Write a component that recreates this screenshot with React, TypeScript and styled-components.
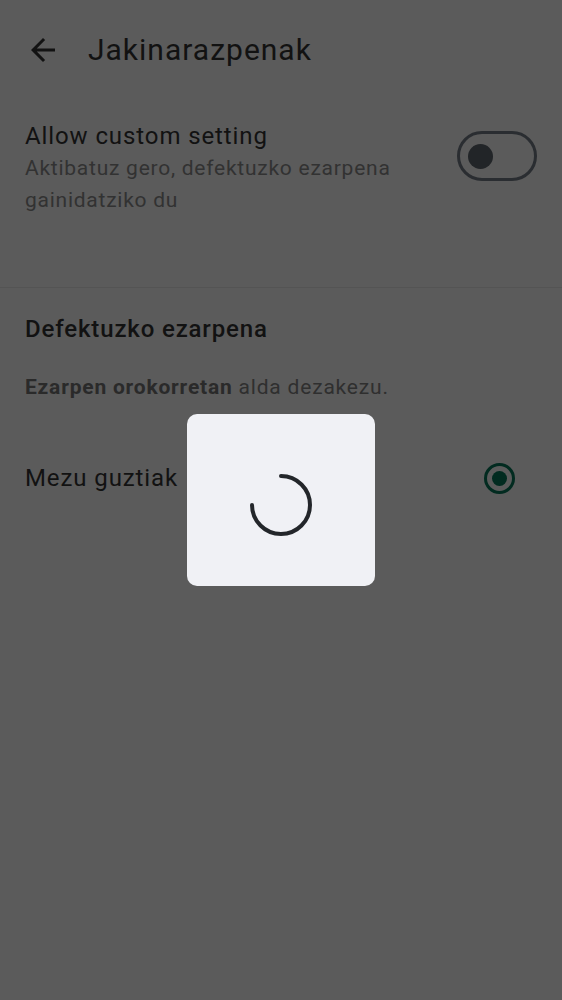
import React from "react";
import styled, { createGlobalStyle } from "styled-components";

const Global = createGlobalStyle`
  html, body { margin: 0; padding: 0; }
  body {
    background: #5b5b5b;
    font-family: Roboto, "Noto Sans", "Liberation Sans", sans-serif;
    -webkit-font-smoothing: antialiased;
  }
`;

const Page = styled.div`
  min-height: 1000px;
  background: #5b5b5b;
  display: flex;
  flex-direction: column;
`;

const Header = styled.header`
  height: 100px;
  display: flex;
  align-items: center;
  padding-left: 25px;
  gap: 27px;
`;

const BackButton = styled.button`
  width: 36px;
  height: 36px;
  padding: 0;
  border: 0;
  background: transparent;
  display: flex;
  color: #121212;
`;

const Title = styled.h1`
  margin: 0;
  font-size: 30px;
  line-height: 36px;
  font-weight: 400;
  color: #121212;
  letter-spacing: 1px;
`;

const SettingRow = styled.div`
  display: flex;
  align-items: flex-start;
  justify-content: space-between;
  padding: 20px 25px 71px 25px;
`;

const SettingText = styled.div`
  display: flex;
  flex-direction: column;
`;

const SettingTitle = styled.div`
  font-size: 24px;
  line-height: 32px;
  color: #121212;
  letter-spacing: 0.9px;
`;

const SettingSub = styled.div`
  font-size: 21px;
  line-height: 32px;
  color: #323232;
  letter-spacing: 0.75px;
  max-width: 400px;
`;

const Toggle = styled.div`
  margin-top: 11px;
  width: 80px;
  height: 50px;
  box-sizing: border-box;
  border: 3px solid #2a2d31;
  border-radius: 25px;
  display: flex;
  align-items: center;
  padding-left: 8px;
  flex-shrink: 0;
`;

const Knob = styled.div`
  width: 25px;
  height: 25px;
  border-radius: 50%;
  background: #222528;
`;

const Divider = styled.hr`
  margin: 0;
  border: 0;
  height: 1px;
  background: #545454;
`;

const SectionHeader = styled.h2`
  margin: 26px 25px 0 25px;
  font-size: 24px;
  line-height: 30px;
  font-weight: 500;
  color: #121212;
  letter-spacing: 0.85px;
`;

const Info = styled.p`
  margin: 29px 25px 0 25px;
  font-size: 21px;
  line-height: 28px;
  color: #2f2f2f;
  letter-spacing: 0.8px;
  b { font-weight: 700; color: #2a2a2a; }
`;

const OptionRow = styled.div`
  margin-top: 61px;
  display: flex;
  align-items: center;
  justify-content: space-between;
  padding: 0 47px 0 25px;
`;

const OptionLabel = styled.span`
  font-size: 24px;
  line-height: 32px;
  color: #121212;
  letter-spacing: 0.9px;
`;

const Radio = styled.div`
  width: 31px;
  height: 31px;
  box-sizing: border-box;
  border: 3px solid #022b20;
  border-radius: 50%;
  display: flex;
  align-items: center;
  justify-content: center;
`;

const RadioDot = styled.div`
  width: 15px;
  height: 15px;
  border-radius: 50%;
  background: #022b20;
`;

const Overlay = styled.div`
  position: fixed;
  inset: 0;
  display: flex;
  align-items: center;
  justify-content: center;
`;

const Dialog = styled.div`
  width: 188px;
  height: 172px;
  border-radius: 10px;
  background: #f0f1f5;
  display: flex;
  align-items: center;
  justify-content: center;
`;

const Spinner = styled.svg`
  width: 66px;
  height: 66px;
  margin-top: 9px;
`;

export default function App() {
  const r = 29;
  const c = 33;
  return (
    <>
      <Global />
      <Page>
        <Header>
          <BackButton aria-label="Back">
            <svg width="36" height="36" viewBox="0 0 24 24" fill="currentColor">
              <path d="M20 11H7.83l5.59-5.59L12 4l-8 8 8 8 1.41-1.41L7.83 13H20v-2z" />
            </svg>
          </BackButton>
          <Title>Jakinarazpenak</Title>
        </Header>
        <SettingRow>
          <SettingText>
            <SettingTitle>Allow custom setting</SettingTitle>
            <SettingSub>Aktibatuz gero, defektuzko ezarpena gainidatziko du</SettingSub>
          </SettingText>
          <Toggle>
            <Knob />
          </Toggle>
        </SettingRow>
        <Divider />
        <SectionHeader>Defektuzko ezarpena</SectionHeader>
        <Info>
          <b>Ezarpen orokorretan</b> alda dezakezu.
        </Info>
        <OptionRow>
          <OptionLabel>Mezu guztiak</OptionLabel>
          <Radio>
            <RadioDot />
          </Radio>
        </OptionRow>
      </Page>
      <Overlay>
        <Dialog>
          <Spinner viewBox="0 0 66 66">
            <path
              d={`M${c} ${c - r} A${r} ${r} 0 1 1 ${c - r} ${c}`}
              fill="none"
              stroke="#23262a"
              strokeWidth="4"
              strokeLinecap="round"
            />
          </Spinner>
        </Dialog>
      </Overlay>
    </>
  );
}
